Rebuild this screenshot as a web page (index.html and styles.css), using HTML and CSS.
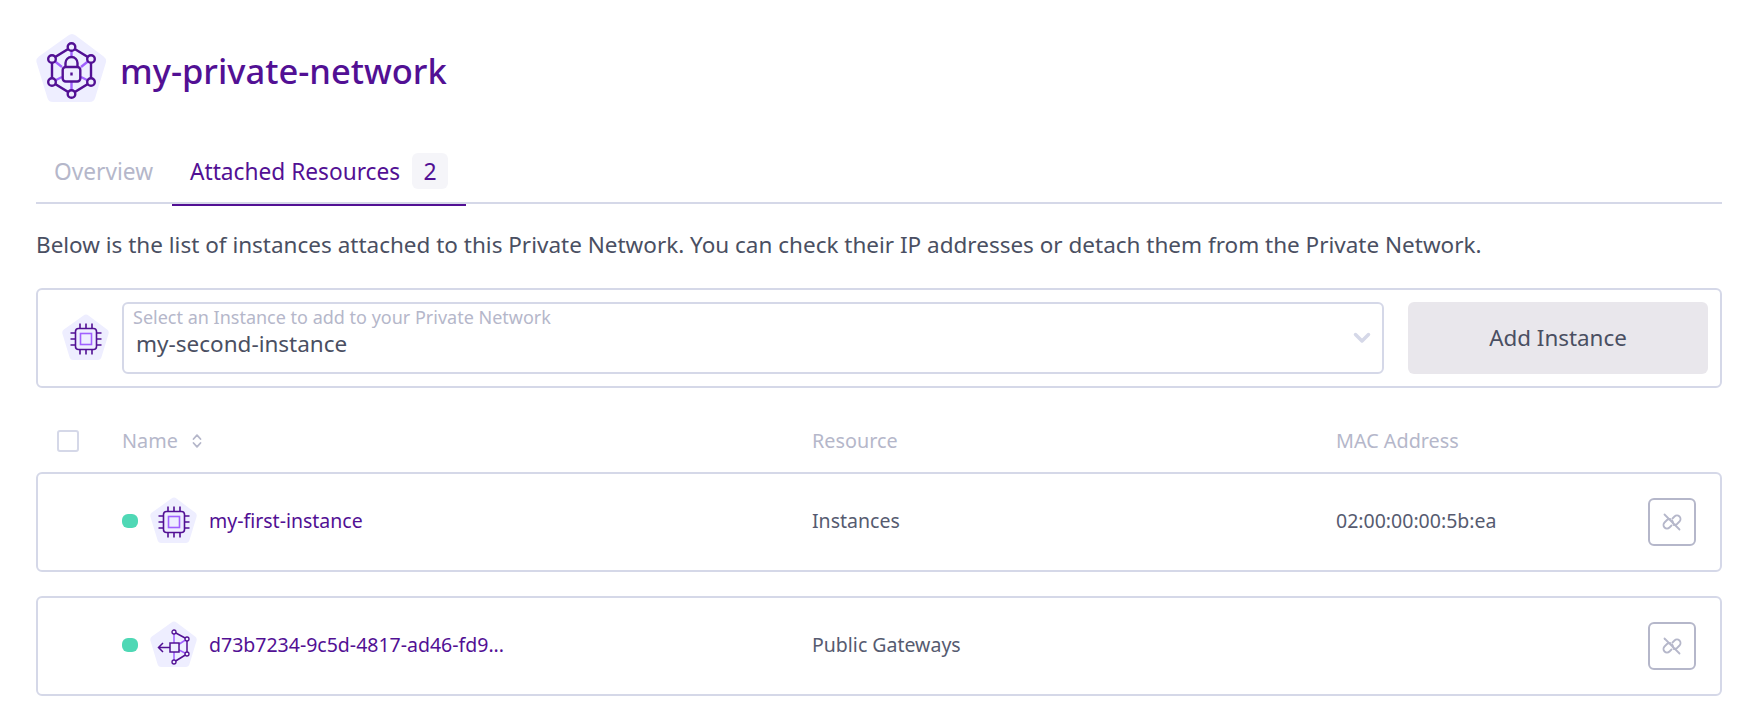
FILE: index.html
```html
<!DOCTYPE html>
<html>
<head>
    <title>my-private-network</title>
    <link rel="stylesheet" href="styles.css">
</head>
<body>
<svg class="defs" width="0" height="0">
    <symbol id="chip" viewBox="0 0 32 32">
        <rect x="5.500" y="5.500" width="21" height="21" rx="3" fill="none" stroke="#521094" stroke-width="1.600"/>
        <rect x="10.500" y="10.500" width="11" height="11" fill="none" stroke="#a060ff" stroke-width="1.600"/>
        <path d="M10 .5v5M16 .5v5M22 .5v5M10 26.500v5M16 26.500v5M22 26.500v5M.5 10h5M.5 16h5M.5 22h5M26.500 10h5M26.500 16h5M26.500 22h5" fill="none" stroke="#521094" stroke-width="1.600"/>
    </symbol>
    <symbol id="pentagon" viewBox="0 0 48 48">
        <path d="M21.500 1.600a4 4 0 0 1 5 0l18.600 14a4 4 0 0 1 1.400 4.400l-7 23a4 4 0 0 1-3.900 3H11.400a4 4 0 0 1-3.900-3l-7-23a4 4 0 0 1 1.400-4.400z" fill="#eeeeff"/>
    </symbol>
    <symbol id="unlink" viewBox="0 0 24 24">
        <g fill="none" stroke="#b5b7ca" stroke-width="1.800" stroke-linecap="round">
            <path d="M12.500 8.500l2-2a3.500 3.500 0 0 1 5 5l-2.500 2.500a3.500 3.500 0 0 1-3.500.8"/>
            <path d="M11.500 15.500l-2 2a3.500 3.500 0 0 1-5-5l2.500-2.500a3.500 3.500 0 0 1 3.500-.8"/>
            <path d="M13 13a3 3 0 0 0-1-2.500"/>
            <path d="M4.500 4.500l15 15"/>
        </g>
    </symbol>
</svg>

<header class="title-row">
    <span class="pent pent-lg">
        <svg class="pent-bg"><use href="#pentagon"/></svg>
        <svg class="pent-icon" viewBox="0 0 54 54">
            <g fill="none" stroke="#a060ff" stroke-width="2.400">
                <path d="M26.500 14V4M26.500 38v13M17 24L7 16M36 24l10-8M17 34l-10 5M36 34l10 5"/>
            </g>
            <g fill="none" stroke="#521094" stroke-width="2.400">
                <path d="M26.500 4L46 16V39L26.500 51L7 39V16Z"/>
                <circle cx="26.500" cy="4" r="3.800" fill="#eeeeff"/>
                <circle cx="46" cy="16" r="3.800" fill="#eeeeff"/>
                <circle cx="46" cy="39" r="3.800" fill="#eeeeff"/>
                <circle cx="26.500" cy="51" r="3.800" fill="#eeeeff"/>
                <circle cx="7" cy="39" r="3.800" fill="#eeeeff"/>
                <circle cx="7" cy="16" r="3.800" fill="#eeeeff"/>
                <path d="M20.500 24v-4a6 6 0 0 1 12 0v4"/>
                <rect x="17.700" y="24" width="17.600" height="14.500" rx="3" fill="#eeeeff"/>
                <path d="M26.500 29.500v3"/>
            </g>
        </svg>
    </span>
    <h1 class="title">my-private-network</h1>
</header>

<nav class="tabs">
    <a class="tab">Overview</a>
    <a class="tab tab-active">Attached Resources <span class="badge">2</span></a>
</nav>

<p class="intro">Below is the list of instances attached to this Private Network. You can check their IP addresses or detach them from the Private Network.</p>

<section class="add-box">
    <span class="pent pent-md">
        <svg class="pent-bg"><use href="#pentagon"/></svg>
        <svg class="pent-icon"><use href="#chip"/></svg>
    </span>
    <div class="select">
        <div class="select-text">
            <span class="select-label">Select an Instance to add to your Private Network</span>
            <span class="select-value">my-second-instance</span>
        </div>
        <svg class="chevron" viewBox="0 0 18 12"><path d="M2.500 2.500L9 9l6.500-6.500" fill="none" stroke="#d5d8e8" stroke-width="3.500" stroke-linecap="round" stroke-linejoin="round"/></svg>
    </div>
    <button class="add-btn">Add Instance</button>
</section>

<div class="grid table-head">
    <span class="check"></span>
    <span class="sort">Name
        <svg class="sort-icon" viewBox="0 0 10 16"><path d="M1.500 6L5 2.200 8.500 6M1.500 10L5 13.800 8.500 10" fill="none" stroke="#b5b7ca" stroke-width="1.800" stroke-linecap="round" stroke-linejoin="round"/></svg>
    </span>
    <span class="cell">Resource</span>
    <span class="cell">MAC Address</span>
</div>

<div class="grid row">
    <span></span>
    <div class="name-cell">
        <span class="dot"></span>
        <span class="pent pent-sm">
            <svg class="pent-bg"><use href="#pentagon"/></svg>
            <svg class="pent-icon"><use href="#chip"/></svg>
        </span>
        <a class="name">my-first-instance</a>
    </div>
    <span class="cell">Instances</span>
    <span class="cell">02:00:00:00:5b:ea</span>
    <button class="unlink"><svg><use href="#unlink"/></svg></button>
</div>

<div class="grid row">
    <span></span>
    <div class="name-cell">
        <span class="dot"></span>
        <span class="pent pent-sm">
            <svg class="pent-bg"><use href="#pentagon"/></svg>
            <svg class="pent-icon gateway" viewBox="0 0 32 32">
                <path d="M16 2v30M16 17.500L29 9M16 17.500L29 24" fill="none" stroke="#a060ff" stroke-width="1.500"/>
                <path d="M16 2L29 9V24L16 32M12 17.500H.5M5 13L.5 17.500 5 22" fill="none" stroke="#521094" stroke-width="1.500"/>
                <rect x="12" y="13" width="9" height="9" fill="#eeeeff" stroke="#521094" stroke-width="1.500"/>
                <g fill="#eeeeff" stroke="#521094" stroke-width="1.300">
                    <circle cx="16" cy="2" r="2"/><circle cx="29" cy="9" r="2"/><circle cx="29" cy="24" r="2"/><circle cx="16" cy="32" r="2"/>
                </g>
            </svg>
        </span>
        <a class="name">d73b7234-9c5d-4817-ad46-fd9...</a>
    </div>
    <span class="cell">Public Gateways</span>
    <span class="cell"></span>
    <button class="unlink"><svg><use href="#unlink"/></svg></button>
</div>
</body>
</html>
```

FILE: styles.css
```css
* {
    box-sizing: border-box;
}

body {
    margin: 0;
    padding: 33px 34px 0 36px;
    height: 718px;
    overflow: hidden;
    background: #fff;
    font-family: "Noto Sans", "Open Sans", sans-serif;
    font-size: 20px;
    color: #4a4f62;
}

.defs {
    position: absolute;
}

/* pentagon icons */
.pent {
    position: relative;
    display: block;
    flex: none;
}

.pent-bg {
    display: block;
    width: 100%;
    height: 100%;
}

.pent-icon {
    position: absolute;
    overflow: visible;
}

.pent-lg {
    width: 72px;
    height: 72px;
}

.pent-lg .pent-icon {
    left: 9px;
    top: 10px;
    width: 54px;
    height: 54px;
}

.pent-md,
.pent-sm {
    width: 48px;
    height: 48px;
}

.pent-md .pent-icon,
.pent-sm .pent-icon {
    left: 8px;
    top: 9px;
    width: 32px;
    height: 32px;
}

/* header */
.title-row {
    display: flex;
    align-items: center;
    gap: 12px;
    height: 72px;
}

.title {
    margin: 2px 0 0;
    font-size: 34.500px;
    font-weight: 500;
    color: #521094;
}

.tabs {
    display: flex;
    gap: 1px;
    height: 51px;
    margin-top: 48px;
    border-bottom: 2px solid #d5d8e8;
}

.tab {
    display: flex;
    align-items: center;
    height: 53px;
    padding: 0 18px 15px;
    font-size: 22.700px;
    color: #b5b7ca;
    border-bottom: 2px solid transparent;
}

.tab-active {
    color: #521094;
    border-bottom-color: #521094;
    gap: 12px;
}

.badge {
    display: flex;
    align-items: center;
    justify-content: center;
    width: 36px;
    height: 36px;
    border-radius: 6px;
    background: #f5f5f9;
    font-size: 23px;
}

.intro {
    margin: 25px 0 0;
    line-height: 32px;
    font-size: 22.500px;
}

/* add instance */
.add-box {
    display: flex;
    align-items: center;
    height: 100px;
    margin-top: 27px;
    padding: 0 12px 0 24px;
    border: 2px solid #d5d8e8;
    border-radius: 6px;
}

.select {
    display: flex;
    align-items: center;
    flex: 1;
    height: 72px;
    margin-left: 12px;
    padding: 0 11px 0 12px;
    border: 2px solid #d5d8e8;
    border-radius: 6px;
}

.select-text {
    flex: 1;
    display: flex;
    flex-direction: column;
}

.select-label {
    font-size: 18px;
    line-height: 22px;
    margin-left: -3px;
    margin-top: -11px;
    color: #b5b7ca;
}

.select-value {
    font-size: 22.500px;
    line-height: 32px;
    color: #4a4f62;
}

.chevron {
    width: 18px;
    height: 12px;
}

.add-btn {
    width: 300px;
    height: 72px;
    margin-left: 24px;
    padding: 0 0 2px;
    border: 0;
    border-radius: 6px;
    background: #e9e7ec;
    font: 400 22.400px "Noto Sans", "Open Sans", sans-serif;
    color: #4a4f62;
}

/* table */
.grid {
    display: grid;
    grid-template-columns: 86px 690px 524px 1fr;
    align-items: center;
}

.cell {
    padding-bottom: 2px;
}

.table-head {
    height: 36px;
    margin-top: 35px;
    font-size: 19.800px;
    color: #b5b7ca;
}

.check {
    width: 22px;
    height: 22px;
    margin-left: 21px;
    border: 2px solid #d5d8e8;
    border-radius: 3px;
}

.sort {
    display: flex;
    align-items: center;
    gap: 14px;
    padding-bottom: 2px;
}

.sort-icon {
    width: 10px;
    height: 16px;
    margin-top: 2px;
}

.row {
    position: relative;
    height: 100px;
    margin-bottom: 24px;
    padding-bottom: 2px;
    border: 2px solid #d5d8e8;
    border-radius: 6px;
    margin-top: 13px;
    font-size: 19.500px;
    color: #565b70;
    grid-template-columns: 84px 690px 524px 1fr;
}

.row + .row {
    margin-top: 0;
}

.name-cell {
    display: flex;
    align-items: center;
    gap: 12px;
}

.dot {
    width: 16px;
    height: 14px;
    border-radius: 6px;
    background: #4fd8b5;
}

.pent-sm {
    margin-right: -1px;
}

.name {
    padding-bottom: 2px;
    color: #521094;
}

.unlink {
    position: absolute;
    right: 24px;
    top: 24px;
    display: flex;
    align-items: center;
    justify-content: center;
    width: 48px;
    height: 48px;
    padding: 0;
    border: 2px solid #b5b7ca;
    border-radius: 6px;
    background: #fff;
}

.unlink svg {
    width: 24px;
    height: 24px;
}
```
